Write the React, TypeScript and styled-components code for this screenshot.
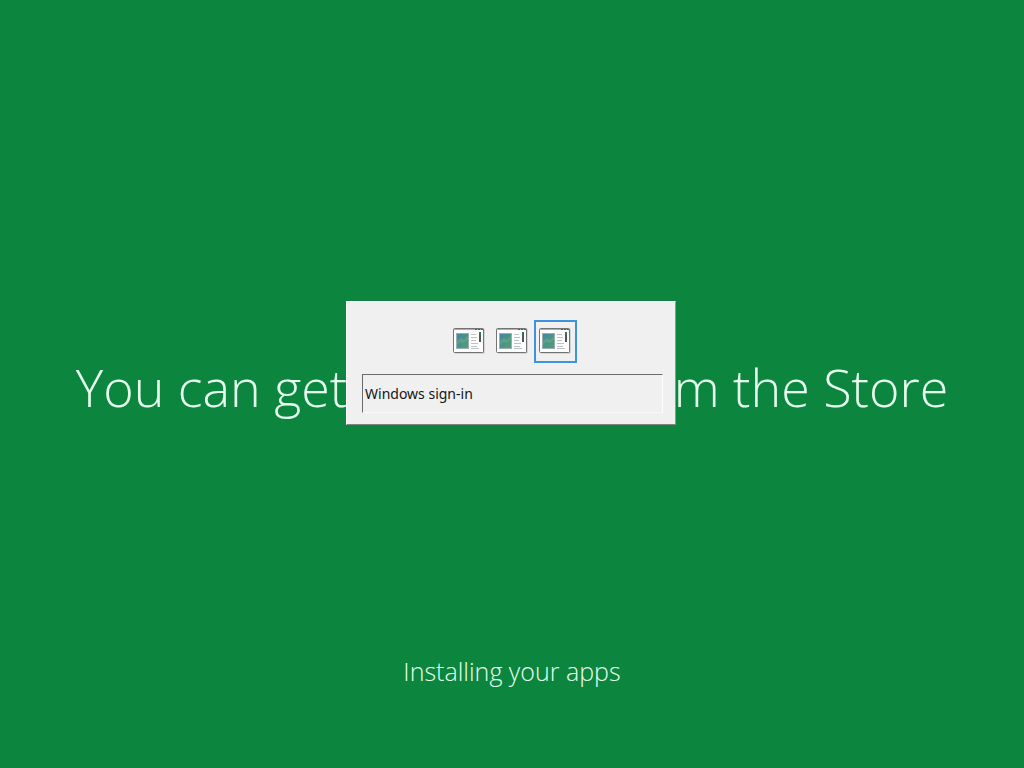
import React, { useState } from "react";
import styled, { createGlobalStyle } from "styled-components";

const GlobalStyle = createGlobalStyle`
  * { box-sizing: border-box; }
  body {
    margin: 0;
    background: #0c863e;
    font-family: "Open Sans", "Noto Sans", sans-serif;
  }
`;

const Screen = styled.main`
  min-height: 100vh;
  display: flex;
  flex-direction: column;
  justify-content: flex-end;
  align-items: center;
  padding-bottom: 77px;
  overflow: hidden;
  background: #0c863e;
  color: #e6ffee;
`;

const Stage = styled.section`
  position: relative;
  width: 100%;
  display: flex;
  justify-content: center;
  margin-bottom: 228px;
`;

const Headline = styled.h1`
  display: flex;
  gap: 18px;
  margin: 0;
  font-size: 52px;
  line-height: 72px;
  font-weight: 300;
  white-space: nowrap;
`;

const Status = styled.p`
  margin: 0;
  font-size: 25px;
  line-height: 40px;
  font-weight: 300;
`;

const Switcher = styled.div`
  position: absolute;
  top: 50%;
  left: 50%;
  transform: translateX(-50%);
  width: 330px;
  margin: -86px 0 0 -1px;
  padding: 18px 12px 11px 15px;
  border: 1px solid;
  border-color: #ffffff #8d9a92 #7d8580 #ffffff;
  background: #f0f0f0;
`;

const WindowList = styled.div`
  display: flex;
  justify-content: center;
`;

const WindowButton = styled.button<{ $active: boolean }>`
  display: flex;
  align-items: center;
  justify-content: center;
  width: 43px;
  height: 43px;
  padding: 0 2px 2px 0;
  border: 2px solid ${(p) => (p.$active ? "#3f92de" : "transparent")};
  background: transparent;
  outline: none;
`;

const WindowTitle = styled.p`
  margin: 11px 0 0;
  padding: 0 2px;
  border: 1px solid;
  border-color: #6c6c6c #fdfdfd #fafafa #6c6c6c;
  color: #151515;
  font-family: "Noto Sans", sans-serif;
  font-size: 14px;
  line-height: 37px;
`;

function WindowIcon() {
  return (
    <svg width="32" height="28" viewBox="0 0 32 28" aria-hidden="true">
      <defs>
        <linearGradient id="scene" x1="0" y1="0" x2="1" y2="1">
          <stop offset="0" stopColor="#4685a6" />
          <stop offset="0.5" stopColor="#4a9488" />
          <stop offset="1" stopColor="#569c78" />
        </linearGradient>
      </defs>
      <rect x="1.5" y="1.5" width="30" height="25" rx="1" fill="#b8b8b8" />
      <rect x="0.5" y="1.5" width="30" height="24" rx="1" fill="#fdfdfd" stroke="#747474" />
      <path d="M1 2.5h29" stroke="#a9aeb3" />
      <path d="M22 2.5h2M25 2.5h2M28 2.5h2" stroke="#555b60" />
      <rect x="3" y="6" width="13" height="16" fill="#9cafb0" />
      <rect x="4" y="7" width="11" height="14" fill="url(#scene)" />
      <path d="M4 14l4-3 3 2 4-4v3l-4 4-4-1-3 3z" fill="#64ad83" opacity=".6" />
      <path d="M18 7.5h5M18 10.5h6M18 13.5h5M18 16.5h7M18 19.5h6M18 21.5h8" stroke="#bfc0c4" />
      <path d="M27 5v10" stroke="#495a5b" strokeWidth="2" />
      <path d="M27 5v3" stroke="#35735c" strokeWidth="2" />
    </svg>
  );
}

const windows = ["Setup", "Store", "Windows sign-in"];

export default function App() {
  const [active, setActive] = useState(2);
  return (
    <>
      <GlobalStyle />
      <Screen>
        <Stage>
          <Headline>
            <span>You can get</span>
            <span>new apps</span>
            <span>from the Store</span>
          </Headline>
          <Switcher role="dialog" aria-label="Switch windows">
            <WindowList>
              {windows.map((title, i) => (
                <WindowButton
                  key={title}
                  type="button"
                  aria-label={title}
                  aria-pressed={i === active}
                  $active={i === active}
                  onClick={() => setActive(i)}
                >
                  <WindowIcon />
                </WindowButton>
              ))}
            </WindowList>
            <WindowTitle>{windows[active]}</WindowTitle>
          </Switcher>
        </Stage>
        <Status>Installing your apps</Status>
      </Screen>
    </>
  );
}
